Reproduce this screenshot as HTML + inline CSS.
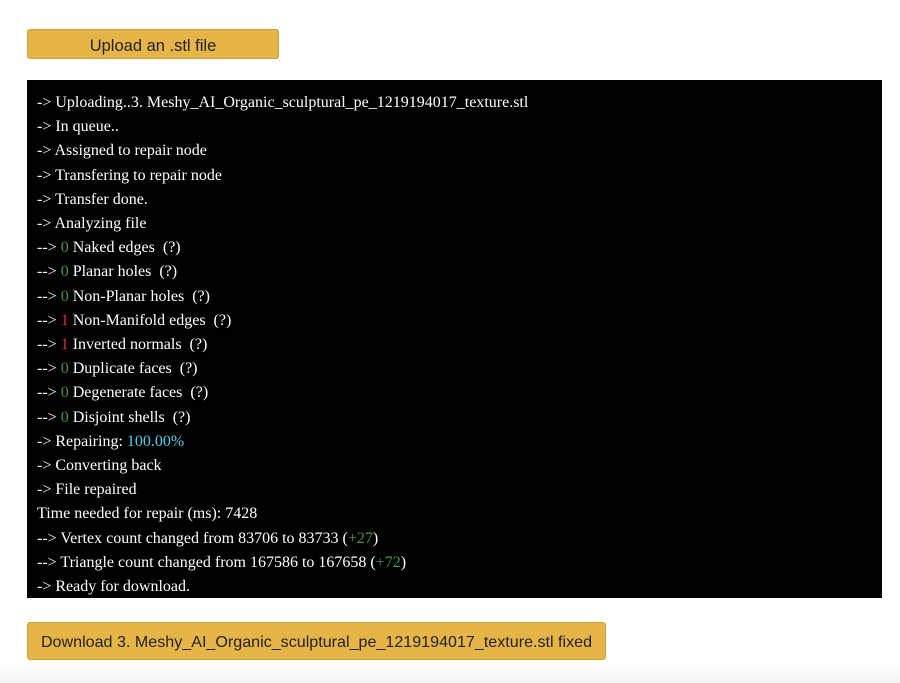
<!DOCTYPE html>
<html><head><style>
html,body{margin:0;padding:0;background:#fff;width:900px;height:683px;overflow:hidden;position:relative}
.btn{position:absolute;background:#e6b547;border:1px solid #c9a03c;border-radius:3px;font-family:"Liberation Sans",sans-serif;font-size:16px;color:#222;box-sizing:border-box;text-align:center}
#up{left:27px;top:29px;width:252px;height:30px;line-height:32px;font-size:16.5px}
#dl{left:27px;top:622px;width:579px;height:38px;line-height:38px;font-size:16.1px}
#log{position:absolute;left:27px;top:80px;width:855px;height:518px;background:#000;box-sizing:border-box;padding:11px 10px;color:#fff;font-family:"Liberation Serif",serif;font-size:16px;line-height:24.2px;white-space:pre}
.g{color:#3c9a3c}.r{color:#e0342c}.c{color:#4fd3ea}
#fade{position:absolute;left:0;right:0;top:663px;height:20px;background:linear-gradient(#fff,#f4f4f4)}
</style></head><body>
<div id="fade"></div>
<div class="btn" id="up">Upload an .stl file</div>
<div id="log">-&gt; Uploading..3. Meshy_AI_Organic_sculptural_pe_1219194017_texture.stl
-&gt; In queue..
-&gt; Assigned to repair node
-&gt; Transfering to repair node
-&gt; Transfer done.
-&gt; Analyzing file
--&gt; <span class="g">0</span> Naked edges  (?)
--&gt; <span class="g">0</span> Planar holes  (?)
--&gt; <span class="g">0</span> Non-Planar holes  (?)
--&gt; <span class="r">1</span> Non-Manifold edges  (?)
--&gt; <span class="r">1</span> Inverted normals  (?)
--&gt; <span class="g">0</span> Duplicate faces  (?)
--&gt; <span class="g">0</span> Degenerate faces  (?)
--&gt; <span class="g">0</span> Disjoint shells  (?)
-&gt; Repairing: <span class="c">100.00%</span>
-&gt; Converting back
-&gt; File repaired
Time needed for repair (ms): 7428
--&gt; Vertex count changed from 83706 to 83733 (<span class="g">+27</span>)
--&gt; Triangle count changed from 167586 to 167658 (<span class="g">+72</span>)
-&gt; Ready for download.</div>
<div class="btn" id="dl">Download 3. Meshy_AI_Organic_sculptural_pe_1219194017_texture.stl fixed</div>
</body></html>
